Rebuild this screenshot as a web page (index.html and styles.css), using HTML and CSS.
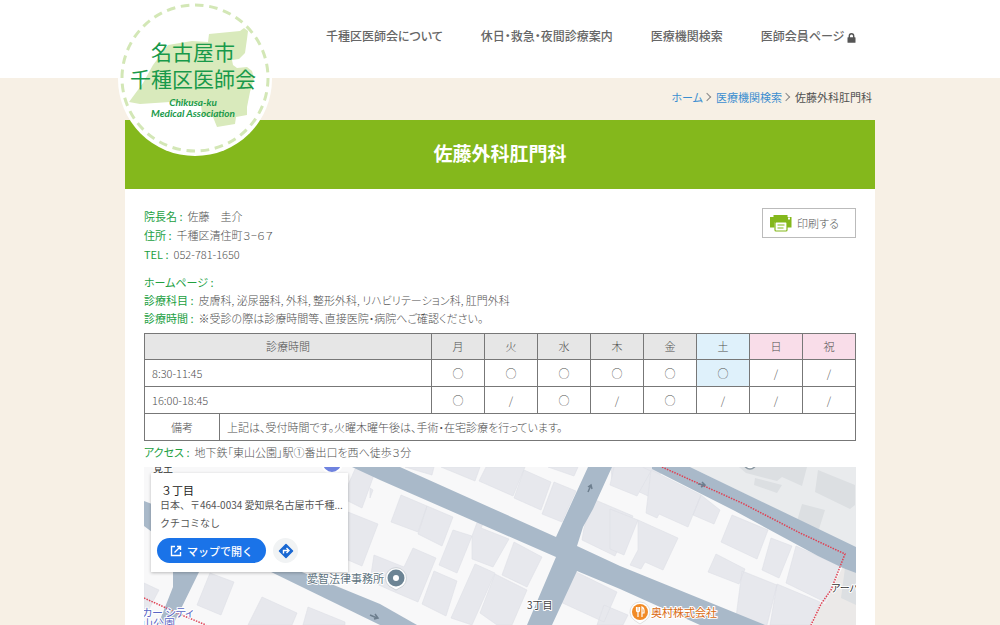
FILE: index.html
```html
<!DOCTYPE html>
<html lang="ja">
<head>
<meta charset="utf-8">
<title>佐藤外科肛門科</title>
<meta name="viewport" content="width=device-width, initial-scale=1">
<link rel="stylesheet" href="styles.css">
</head>
<body>
<header class="site-header">
  <div class="wrap header-inner">
    <a class="logo" href="#">
      <svg class="logo-art" viewBox="118 2 154 154" aria-hidden="true">
        <circle cx="195" cy="79" r="77" fill="#fff"/>
        <path d="M209 34l31-3 4-3 4 3-1 8-2 14-6 6-7 1 1 5 4 3 10-1 5 4 2 7-4 14-3 15v8l-11 2-1 7-18 3-4-10-11-2-1-11-12-1-19-1-30 2-11-2 14-19 10-18 15-20 12-2 12-2 16 1z" fill="#d9eabc"/>
        <circle cx="195" cy="78" r="73" fill="none" stroke="#d3e7b6" stroke-width="3" stroke-dasharray="6 4" pathLength="320"/>
      </svg>
      <span class="logo-name">名古屋市<br>千種区医師会</span>
      <span class="logo-en">Chikusa-ku<br>Medical Association</span>
    </a>
    <nav class="global-nav">
      <a href="#">千種区医師会について</a>
      <a href="#">休日・救急・夜間診療案内</a>
      <a href="#">医療機関検索</a>
      <a href="#">医師会員ページ
        <svg class="lock" viewBox="0 0 9 10" aria-hidden="true"><path d="M2.3 5V3a2.2 2.2 0 0 1 4.4 0v2" fill="none" stroke="#555" stroke-width="1.4"/><rect x=".5" y="4.2" width="8" height="5.6" rx=".6" fill="#555"/></svg></a>
    </nav>
  </div>
</header>
<main class="wrap">
  <nav class="breadcrumb"><a href="#">ホーム</a><i class="sep"></i><a href="#">医療機関検索</a><i class="sep"></i><span>佐藤外科肛門科</span></nav>
  <h1 class="page-title">佐藤外科肛門科</h1>
  <section class="content">
    <div class="top">
      <dl class="info">
        <div><dt>院長名 :</dt><dd>佐藤　圭介</dd></div>
        <div><dt>住所 :</dt><dd>千種区清住町３−６７</dd></div>
        <div><dt>TEL :</dt><dd>052-781-1650</dd></div>
      </dl>
      <button class="print" type="button">
        <svg class="print-icon" viewBox="0 0 22 17" aria-hidden="true"><path d="M3.500 0h14v2H21.500v10.500H17V7.500H4.500v5H0V2h3.500z" fill="#84b81c"/><rect x="18" y="2.500" width="2" height="2" fill="#fff"/><rect x="5" y="7" width="12" height="9" rx="1" fill="#fff" stroke="#84b81c" stroke-width="1.200"/><path d="M7.500 10h7M7.500 13h6" stroke="#84b81c" stroke-width="1.200"/></svg>
        印刷する
      </button>
    </div>
    <dl class="info detail">
      <div><dt>ホームページ :</dt><dd></dd></div>
      <div><dt>診療科目 :</dt><dd>皮膚科, 泌尿器科, 外科, 整形外科, リハビリテーション科, 肛門外科</dd></div>
      <div><dt>診療時間 :</dt><dd>※受診の際は診療時間等、直接医院・病院へご確認ください。</dd></div>
    </dl>
    <table class="hours">
      <colgroup><col class="c-note"><col><col class="c-day"><col class="c-day"><col class="c-day"><col class="c-day"><col class="c-day"><col class="c-day"><col class="c-day"><col class="c-day"></colgroup>
      <thead>
        <tr><th colspan="2">診療時間</th><th>月</th><th>火</th><th>水</th><th>木</th><th>金</th><th class="sat">土</th><th class="hol">日</th><th class="hol">祝</th></tr>
      </thead>
      <tbody>
        <tr><td class="txt" colspan="2">8:30-11:45</td><td>○</td><td>○</td><td>○</td><td>○</td><td>○</td><td class="sat">○</td><td>/</td><td>/</td></tr>
        <tr><td class="txt" colspan="2">16:00-18:45</td><td>○</td><td>/</td><td>○</td><td>/</td><td>○</td><td>/</td><td>/</td><td>/</td></tr>
        <tr><td>備考</td><td class="txt" colspan="9">上記は、受付時間です。火曜木曜午後は、手術・在宅診療を行っています。</td></tr>
      </tbody>
    </table>
    <dl class="info access">
      <div><dt>アクセス :</dt><dd>地下鉄「東山公園」駅①番出口を西へ徒歩３分</dd></div>
    </dl>
    <div class="map">
      <svg class="map-art" viewBox="144 467 712 158" preserveAspectRatio="xMinYMin slice" role="img" aria-label="地図">
        <rect x="144" y="467" width="712" height="158" fill="#f8f8f9"/>
        <path d="M690 467h166v81z" fill="#e9ebed"/>
        <path d="M843 566l13 2v57h-44l9-23 4 2z" fill="#ebe9e8"/>
        <g fill="#e7e8ed" stroke="#dddfe5" stroke-width=".6">
          <path d="M405 467h29l-2 8zM443 467h37l-5 14-34-14zM486 467h39l-12 29-34-15zM524 470l27 12-10 28-27-12zM554 482l22 9-14 31-20-8zM548 467h30l-4 9z"/>
          <path d="M401 495l26 11-9 26-27-10zM427 506l26 11-11 29-24-12zM370 488l3 2-3 8zM453 530l19 6-15 37-18-8zM472 536l6-16 6 2-3 6 28 11-16 28-21-8zM514 542l28 15-15 30-25-12zM475 564l20 9-23 52-21-7zM495 574l32 16-15 35h-15l-17-12zM434 571l23 10-11 35-24-12zM413 548l23 10-18 44-28-12-20-9 4-26 30 12z"/>
          <path d="M593 499l40 17-18 40-33-16 2-12zM611 467h53l-16 29-36-17zM570 569l47 23-13 30-48-22zM604 605l24 10-5 10h-26z"/>
          <path d="M614 467h28l9 4-14 25-27-11zM651 470l50 25-13 32-29-13-2 4-11-5zM701 495l19 15-6 14-21-9zM732 515l36 15-11 29-36-17zM771 538l21 8-13 32-17-8zM796 546l44 20-15 36-39-19zM716 554l29 15-6 15-31-12zM742 571l35 14-10 40h-32zM777 584l43 18-10 23h-40z"/>
          <path d="M610 509l28 11-14 35-14-6zM638 520l40 18-15 32-18-8-4 7-11-4 8-15z"/>
          <path d="M356 467l18 8-12 33-14-7v-16zM348 512l30 12-16 42-14-6zM144 583l15 7-11 21-4-2zM210 573l24 9-13 33-24-10zM262 597l35 16-5 12h-44zM308 607l37 15v3h-42z"/>
        </g>
        <g fill="#dcdfe2">
          <path d="M739 467h68l-5 19-20-9-5 4-31-8zM755 478l27 7-5 8-23-8zM818 470l37 15v20l-5 4-35-17zM802 504l23 6-6 19-22-8zM845 568l11 5v32l-15-7z"/>
        </g>
        <g fill="#a9b9c9">
          <path d="M342 467h58l156 70 32-70h24l-15 33-4 9-10 18-6 19 43 20 145 59h-65l-80-36-43-18-25 54h-25l29-68-176-77-28-13z"/>
          <path d="M652 467h38l166 80v26l-13-5-25-12-83-45-83-42z"/>
          <path d="M267 570h30l83 34 37 21h-37z"/>
          <path d="M173 572h26l-26 53h-15l15-38zM144 501l8 3v28l-8-6z"/>
        </g>
        <path d="M662 467l82 37 54 28 47 22-14 36-10 14-10 21M144 598l40 18 22 9" fill="none" stroke="#df4052" stroke-width="1.500" stroke-dasharray="1.500 1.200"/>
        <path d="M588 492l3-7m-3 2l3-2 1 4M370 615l7 3m-2-4l3 4-4 1M698 484l7 1m-3-3l3 3-4 2" fill="none" stroke="#6d7e8e" stroke-width="1.500"/>
        <circle cx="750" cy="463" r="6" fill="#fff" stroke="#8b98a2" stroke-width="1.500"/>
        <circle cx="332" cy="463" r="10" fill="#6f83df" stroke="#fff" stroke-width="2"/>
        <path d="M396 590l-7-4a10.500 10.500 0 1 1 14 0z" fill="#fff" stroke="#b5bcc3" stroke-width=".6"/>
        <circle cx="396" cy="578" r="8.500" fill="#6c8494"/><circle cx="396" cy="578" r="3" fill="#fff"/>
        <path d="M640 624l-6-4a10 10 0 1 1 12 0z" fill="#fff" stroke="#ccc" stroke-width=".6"/>
        <circle cx="640" cy="612" r="8" fill="#f18b27"/>
        <path d="M636.500 607v3.500q0 1.500 1.500 1.500t1.500-1.500V607M638 607v10M642 617v-10q2.500 1 2 6h-2" fill="none" stroke="#fff" stroke-width="1.200"/>
        <g class="map-text">
          <text x="307" y="583" fill="#5f7582">愛智法律事務所</text>
          <text x="527" y="609" fill="#444" class="small">3丁目</text>
          <text x="651" y="617" fill="#d96a12">奥村株式会社</text>
          <text x="831" y="592" fill="#333" class="small">アーバン</text>
          <text x="142" y="617" fill="#5a66c4">カー シティ</text>
          <text x="142" y="628" fill="#5a66c4">山公園</text>
          <text x="153" y="472" fill="#333" class="small">覚王</text>
        </g>
      </svg>
      <div class="map-card">
        <h2>３丁目</h2>
        <p>日本、〒464-0034 愛知県名古屋市千種...</p>
        <p class="review">クチコミなし</p>
        <div class="card-actions">
          <a class="open" href="#"><svg viewBox="0 0 12 12" width="12" height="12" aria-hidden="true"><path d="M5 1.500H1.500v9h9V7M7 1.500h3.500V5M10.500 1.500L4.500 7.500" fill="none" stroke="#fff" stroke-width="1.400"/></svg>マップで開く</a>
          <button class="route" type="button" aria-label="ルート"><svg viewBox="0 0 16 16" width="16" height="16" aria-hidden="true"><path d="M8 1.500L14.500 8 8 14.500 1.500 8z" fill="#1967d2" stroke="#1967d2" stroke-width="1.500" stroke-linejoin="round"/><path d="M5.500 10.500V7.500H10M8.500 5l2.500 2.500L8.500 10" fill="none" stroke="#fff" stroke-width="1.400"/></svg></button>
        </div>
      </div>
    </div>
  </section>
</main>
</body>
</html>
```
FILE: styles.css
```css
* { box-sizing: border-box; }
body {
  margin: 0;
  background: #f7f0e5;
  color: #505050;
  font-family: "Noto Sans CJK JP", sans-serif;
  font-size: 11px;
  font-weight: 300;
  line-height: 18px;
  font-feature-settings: "palt";
}
a { text-decoration: none; color: inherit; }
dl, dd, p, h1, h2 { margin: 0; }
.wrap { width: 100%; max-width: 750px; margin: 0 auto; }

.site-header { background: #fff; }
.header-inner {
  position: relative;
  display: flex;
  justify-content: flex-end;
  height: 78px;
}
.logo {
  position: absolute;
  left: -7px;
  top: 2px;
  width: 154px;
  height: 154px;
  padding: 36px 4px 0 0;
  text-align: center;
  color: #18994a;
}
.logo-art { position: absolute; inset: 0; }
.logo-name, .logo-en { position: relative; display: block; white-space: nowrap; }
.logo-name { font-size: 21px; line-height: 27px; font-weight: 400; font-feature-settings: normal; }
.logo-en { margin-top: 5px; font: italic 700 10px/11px Lato, sans-serif; }
.global-nav {
  display: flex;
  gap: 38px;
  padding: 27px 19px 0 0;
  font-size: 12px;
  font-weight: 500;
  color: #666;
  white-space: nowrap;
}
.lock { width: 9px; height: 10px; vertical-align: -2px; }

.breadcrumb {
  display: flex;
  justify-content: flex-end;
  align-items: center;
  height: 42px;
  padding: 0 3px 4px 0;
  font-weight: 400;
}
.breadcrumb a { color: #3b8ed0; }
.sep {
  width: 6px;
  height: 6px;
  margin: 0 6px 0 1px;
  border: solid #888;
  border-width: 1px 1px 0 0;
  transform: rotate(45deg);
}
.page-title {
  padding: 18px 0 22px;
  background: #84b81c;
  color: #fff;
  font-size: 19px;
  font-weight: 700;
  line-height: 29px;
  text-align: center;
}
.content { padding: 18px 19px 0; background: #fff; }
.top { display: flex; justify-content: space-between; align-items: flex-start; }
.info div { display: flex; gap: 5px; line-height: 19px; }
.info dt { color: #22a03f; font-weight: 400; white-space: nowrap; }
.detail { margin-top: 9px; }
.detail div { line-height: 18px; }
.print {
  display: flex;
  align-items: center;
  gap: 5px;
  width: 94px;
  height: 30px;
  margin-top: 1px;
  padding: 0 7px;
  border: 1px solid #bbb;
  background: #fff;
  color: #555;
  font: inherit;
  white-space: nowrap;
}
.print-icon { width: 22px; height: 17px; }

.hours {
  width: 100%;
  margin-top: 6px;
  border-collapse: collapse;
  table-layout: fixed;
  text-align: center;
}
.c-note { width: 75px; }
.c-day { width: 53px; }
.hours th, .hours td { padding: 4px 0; border: 1px solid #777; font-weight: 300; }
.hours th { background: #e6e6e6; line-height: 17px; }
.hours .txt { padding-left: 7px; text-align: left; }
.hours .sat { background: #dff1fb; }
.hours .hol { background: #f9dde9; }
.access { margin-top: 2px; }

.map { position: relative; margin-top: 5px; overflow: hidden; }
.map-art { display: block; width: 100%; }
.map-text { font-size: 11px; font-weight: 400; paint-order: stroke; stroke: #fff; stroke-width: 2px; stroke-linejoin: round; }
.map-text .small { font-size: 10px; }
.map-card {
  position: absolute;
  left: 7px;
  top: 6px;
  width: 197px;
  padding: 8px 6px 9px;
  background: #fff;
  box-shadow: 0 1px 3px rgba(0, 0, 0, .25);
  color: #555;
  font-feature-settings: normal;
}
.map-card h2 { padding-left: 4px; font-size: 11px; font-weight: 400; line-height: 18px; color: #222; }
.map-card p { padding-left: 3px; font-size: 10px; font-weight: 400; line-height: 12px; white-space: nowrap; }
.map-card .review { margin-top: 6px; }
.card-actions { display: flex; align-items: center; gap: 7px; margin-top: 9px; }
.open {
  display: flex;
  align-items: center;
  gap: 5px;
  height: 25px;
  padding: 0 13px;
  border-radius: 13px;
  background: #1a73e8;
  color: #fff;
  font-weight: 500;
}
.route {
  display: grid;
  place-items: center;
  width: 25px;
  height: 25px;
  padding: 0;
  border: 0;
  border-radius: 50%;
  background: #f1f3f4;
}
```
